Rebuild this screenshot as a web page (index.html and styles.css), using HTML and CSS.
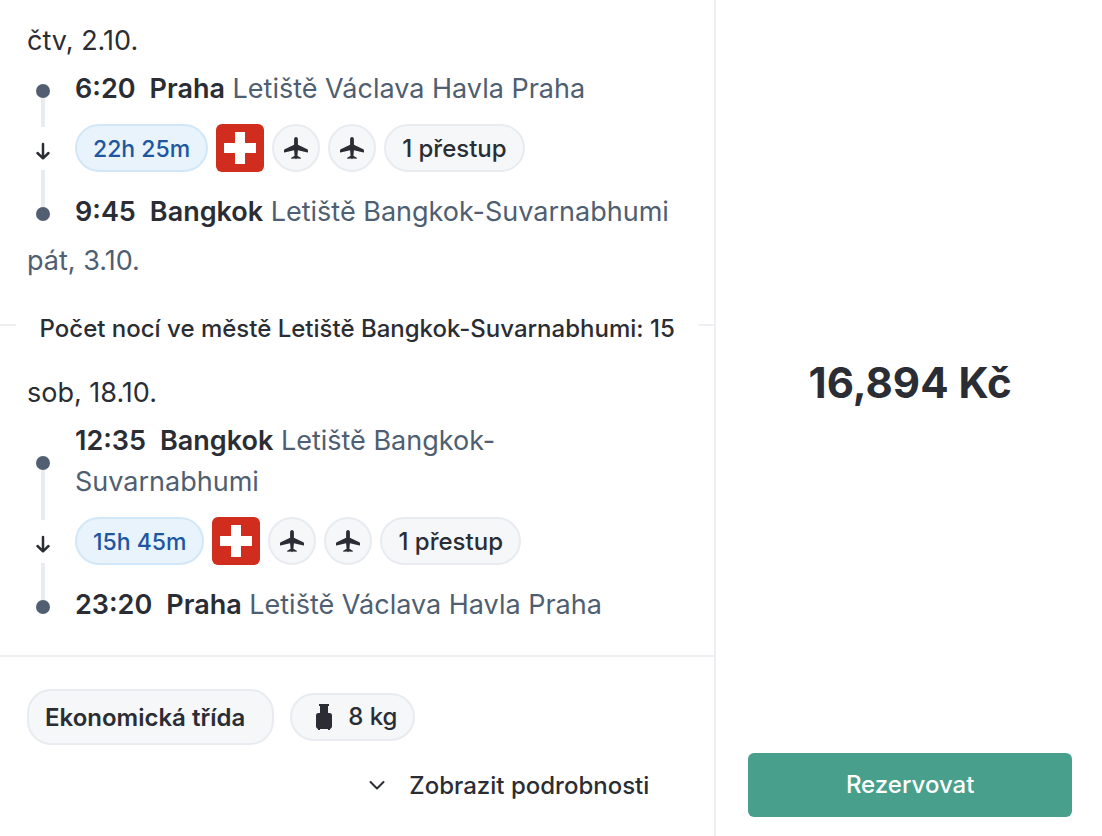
FILE: index.html
```html
<!DOCTYPE html>
<html lang="cs">
<head>
  <meta charset="UTF-8" />
  <meta name="viewport" content="width=device-width, initial-scale=1" />
  <title>Praha – Bangkok</title>
  <link rel="stylesheet" href="styles.css">
</head>
<body>
  <!-- shared icons -->
  <svg class="sprite" aria-hidden="true">
    <symbol id="plane" viewBox="0 0 24 24">
      <path d="M12 1c-1.200 0-1.900 1-1.900 2.300v5.400L.700 13.300c-.5.300-.7.700-.7 1.200v1.600c0 .3.200.4.500.3l9.600-2.200.5 5.500-3.300 2c-.3.200-.3 1 .1 1l3.700-.2.900.8.900-.8 3.700.2c.4 0 .4-.8.1-1l-3.300-2 .5-5.500 9.600 2.200c.3.100.5 0 .5-.3v-1.600c0-.5-.2-.9-.7-1.200l-9.400-4.600V3.300C13.900 2 13.200 1 12 1z" />
    </symbol>
    <symbol id="arrow" viewBox="0 0 16 24">
      <path d="M8 7v14M2.500 16L8 21.300l5.500-5.300" />
    </symbol>
    <symbol id="swiss" viewBox="0 0 48 48">
      <rect width="48" height="48" fill="#d12d1f" />
      <path d="M19 8h10v11h11v10H29v11H19V29H8V19h11z" fill="#fff" />
    </symbol>
  </svg>

  <main class="trip">
    <section class="itinerary">
      <div class="legs">
        <div class="leg">
          <p class="date">čtv, 2.10.</p>
          <div class="stop first">
            <span class="rail"><span class="dot"></span></span>
            <p class="place"><b class="time">6:20</b><b>Praha</b> Letiště Václava Havla Praha</p>
          </div>
          <div class="flight">
            <span class="rail"><svg class="arrow"><use href="#arrow" /></svg></span>
            <div class="badges">
              <span class="badge info">22h 25m</span>
              <svg class="carrier" role="img" aria-label="SWISS"><use href="#swiss" /></svg>
              <span class="badge round"><svg><use href="#plane" /></svg></span>
              <span class="badge round"><svg><use href="#plane" /></svg></span>
              <span class="badge">1 přestup</span>
            </div>
          </div>
          <div class="stop last">
            <span class="rail"><span class="dot"></span></span>
            <p class="place"><b class="time">9:45</b><b>Bangkok</b> Letiště Bangkok-Suvarnabhumi</p>
          </div>
          <p class="date arrival">pát, 3.10.</p>
        </div>

        <div class="nights"><span>Počet nocí ve městě Letiště Bangkok-Suvarnabhumi: 15</span></div>

        <div class="leg">
          <p class="date">sob, 18.10.</p>
          <div class="stop first">
            <span class="rail"><span class="dot"></span></span>
            <p class="place"><b class="time">12:35</b><b>Bangkok</b> Letiště Bangkok-Suvarnabhumi</p>
          </div>
          <div class="flight">
            <span class="rail"><svg class="arrow"><use href="#arrow" /></svg></span>
            <div class="badges">
              <span class="badge info">15h 45m</span>
              <svg class="carrier" role="img" aria-label="SWISS"><use href="#swiss" /></svg>
              <span class="badge round"><svg><use href="#plane" /></svg></span>
              <span class="badge round"><svg><use href="#plane" /></svg></span>
              <span class="badge">1 přestup</span>
            </div>
          </div>
          <div class="stop last">
            <span class="rail"><span class="dot"></span></span>
            <p class="place"><b class="time">23:20</b><b>Praha</b> Letiště Václava Havla Praha</p>
          </div>
        </div>
      </div>

      <div class="extras">
        <div class="chips">
          <span class="badge cabin">Ekonomická třída</span>
          <span class="badge bag">
            <svg viewBox="0 0 16 26">
              <path d="M3 0h10v2h-1v7h1.500A2.500 2.500 0 0 1 16 11.500v11a2.500 2.500 0 0 1-2 2.400V26h-2v-1H4v1H2v-1.100a2.500 2.500 0 0 1-2-2.400v-11A2.500 2.500 0 0 1 2.500 9H4V2H3z" />
            </svg>
            8 kg
          </span>
        </div>
        <button class="details" type="button">
          <svg viewBox="0 0 16 16"><path d="M1.500 4L8 10.500 14.500 4" /></svg>
          Zobrazit podrobnosti
        </button>
      </div>
    </section>

    <aside class="booking">
      <p class="price">16,894 Kč</p>
      <button class="book" type="button">Rezervovat</button>
    </aside>
  </main>
</body>
</html>
```
FILE: styles.css
```css
* { box-sizing: border-box; }
body {
  font-family: Inter, "Liberation Sans", sans-serif;
  font-size: 24px;
  line-height: 32px;
  color: #2a2d33;
  background: #fff;
  margin: 0;
}
p { margin: 0; }
b { font-weight: 600; }
button {
  font: inherit;
  font-weight: 500;
  border: none;
  cursor: pointer;
}
.sprite {
  position: absolute;
  width: 0;
  height: 0;
}
.trip {
  display: flex;
  min-height: 100vh;
}
.itinerary {
  flex: 0 0 65%;
  border-right: 2px solid #eeeff5;
}

/* legs */
.legs {
  padding: 20px 0 26px;
  border-bottom: 2px solid #eeeff3;
}
.leg {
  padding: 0 38px 0 27px;
}
.date {
  font-size: 27px;
  line-height: 41px;
  margin-bottom: 7px;
}
.arrival {
  color: #4f5e71;
  margin: 4px 0 0;
}
.stop, .flight {
  display: flex;
  gap: 16px;
}
.rail {
  flex: 0 0 32px;
  display: flex;
  flex-direction: column;
  align-items: center;
  justify-content: center;
}
.stop .rail::before,
.stop .rail::after {
  content: "";
  flex: 1;
  width: 4px;
}
.first .rail::after,
.last .rail::before {
  background: #e8ebf0;
}
.dot {
  width: 14px;
  height: 14px;
  border-radius: 50%;
  background: #525e71;
}
.place {
  font-size: 27px;
  line-height: 41px;
  padding-bottom: 4px;
  color: #4f5e71;
}
.place b { color: #2a2d33; }
.place .time { margin-right: 14px; }
.flight .rail { justify-content: space-between; }
.flight .rail::before,
.flight .rail::after {
  content: "";
  width: 4px;
  height: 14px;
  background: #e8ebf0;
}
.flight .rail::after { height: 21px; }
.arrow {
  width: 16px;
  height: 24px;
  fill: none;
  stroke: #2a2d33;
  stroke-width: 2.500;
  stroke-linecap: round;
  stroke-linejoin: round;
}

/* badges */
.badges {
  display: flex;
  gap: 8px;
  padding: 11px 0 19px;
}
.badge {
  display: flex;
  align-items: center;
  height: 48px;
  padding: 2px 16px 0;
  border: 2px solid #e8ebf0;
  border-radius: 24px;
  background: #f5f7f9;
  font-weight: 500;
  white-space: nowrap;
}
.info {
  font-size: 23px;
  color: #20569e;
  background: #e8f3fc;
  border-color: #d2e7f8;
}
.round {
  width: 48px;
  padding: 0;
  justify-content: center;
}
.round svg {
  width: 24px;
  height: 24px;
  fill: #2a2d33;
}
.carrier {
  width: 48px;
  height: 48px;
  border-radius: 6px;
}

/* nights between the legs */
.nights {
  display: flex;
  align-items: center;
  margin: 24px 0 27px;
  font-weight: 500;
}
.nights::before,
.nights::after {
  content: "";
  flex: 1;
  height: 2px;
  background: #eeeff3;
}
.nights span { padding: 8px 24px 0; }

/* class, baggage, details */
.extras {
  display: flex;
  flex-direction: column;
  padding: 32px 65px 26px 27px;
}
.chips {
  display: flex;
  align-items: center;
  gap: 16px;
}
.cabin {
  height: 56px;
  padding-right: 27px;
  font-weight: 600;
}
.bag {
  gap: 16px;
  padding: 0 16px 0 24px;
}
.bag svg {
  width: 16px;
  height: 26px;
  fill: #2a2d33;
}
.details {
  display: flex;
  align-items: center;
  gap: 24px;
  align-self: flex-end;
  height: 48px;
  margin-top: 17px;
  padding: 0;
  color: #2a2d33;
  background: none;
}
.details svg {
  width: 16px;
  height: 16px;
  fill: none;
  stroke: #2a2d33;
  stroke-width: 2;
  stroke-linecap: round;
  stroke-linejoin: round;
}

/* price and button */
.booking {
  flex: 1;
  display: flex;
  flex-direction: column;
  padding: 12px 30px 19px 32px;
}
.price {
  margin: auto;
  font-size: 42px;
  line-height: 48px;
  font-weight: 700;
}
.book {
  height: 64px;
  color: #fff;
  background: #48a08c;
  border-radius: 6px;
}
```
